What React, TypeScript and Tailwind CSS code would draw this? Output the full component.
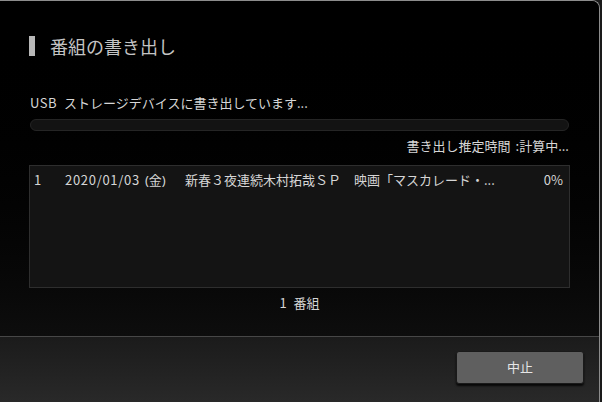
import React from "react";

const font = { fontFamily: '"Noto Sans CJK JP", "Noto Sans", sans-serif' };

interface ExportItem {
  no: number;
  date: string;
  day: string;
  title: string;
  progress: number;
}

const items: ExportItem[] = [
  {
    no: 1,
    date: "2020/01/03",
    day: "(金)",
    title: "新春３夜連続木村拓哉ＳＰ　映画「マスカレード・...",
    progress: 0,
  },
];

const ItemRow: React.FC<{ item: ExportItem }> = ({ item }) => (
  <div className="flex items-center h-[16px] text-[13px] leading-[16px] text-[#d6d6d6]">
    <span className="w-[35px] pl-[4px]">{item.no}</span>
    <span className="w-[120px] whitespace-nowrap">
      <span className="tracking-[0.7px]">{item.date}</span>
      <span className="ml-[5px]" style={{ fontFamily: '"Noto Sans", "Noto Sans CJK JP", sans-serif' }}>
        {item.day}
      </span>
    </span>
    <span className="flex-1 whitespace-nowrap">{item.title}</span>
    <span className="w-[40px] text-right pr-[6px]">{item.progress}%</span>
  </div>
);

export default function App() {
  return (
    <div className="w-[602px] h-[402px] bg-[#1a1a1a]" style={font}>
      <div className="w-[600px] h-[402px] flex flex-col border-t border-r border-[#8c8c8c] rounded-tr-[8px] overflow-hidden">
        {/* body */}
        <div className="h-[335px] px-[29px] bg-gradient-to-b from-[#000000] to-[#0d0d0d]">
          <div className="mt-[35px] flex items-center h-[20px]">
            <div className="w-[6px] h-[20px] bg-[#b8b8b8]" />
            <h1 className="ml-[15px] text-[18px] leading-[20px] text-[#c4c4c4]">番組の書き出し</h1>
          </div>

          <p className="mt-[39px] pl-[1px] text-[13px] leading-[16px] text-[#d6d6d6] whitespace-nowrap">
            <span className="tracking-[0.5px]">USB</span>
            <span className="ml-[7px]">ストレージデバイスに書き出しています...</span>
          </p>

          <div className="mt-[8px] h-[12px] ml-[1px] mr-[1px] rounded-full bg-[#131313] border border-[#252525]" />

          <p className="mt-[7px] text-right pr-[1px] text-[13px] leading-[16px] text-[#d6d6d6] whitespace-nowrap">
            書き出し推定時間<span className="ml-[5px]">:計算中...</span>
          </p>

          <div className="mt-[11px] h-[123px] bg-[#141414] border border-[#2e2e2e] pt-[6px]">
            {items.map((it) => (
              <ItemRow key={it.no} item={it} />
            ))}
          </div>

          <p className="mt-[7px] text-center text-[13px] leading-[16px] text-[#d6d6d6]">
            1<span className="ml-[7px]">番組</span>
          </p>
        </div>

        {/* footer */}
        <div className="flex-1 flex items-center justify-end pr-[15px] pb-[5px] border-t border-[#474747] bg-gradient-to-b from-[#1b1b1b] to-[#292929]">
          <button className="w-[128px] h-[33px] rounded-[3px] bg-[#5f5f5f] border border-[#1a1a1a] shadow-[0_2px_2px_rgba(0,0,0,0.8)] text-[13px] text-[#e6e6e6]">
            中止
          </button>
        </div>
      </div>
    </div>
  );
}
